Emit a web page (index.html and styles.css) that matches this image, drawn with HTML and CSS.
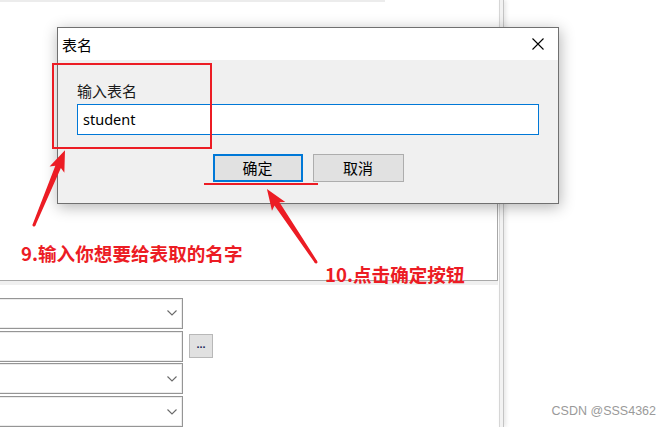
FILE: index.html
```html
<!DOCTYPE html>
<html lang="zh">
<head>
<meta charset="utf-8">
<title>表名</title>
<link rel="stylesheet" href="styles.css">
</head>
<body>
<div class="app">
  <div class="left">
    <div class="topline"></div>
    <div class="panel"></div>
    <div class="band"></div>
    <div class="form">
      <div class="row"><div class="combo"><svg class="chev" width="10" height="6" viewBox="0 0 10 6"><polyline points="0.5,0.5 5,5 9.5,0.5" fill="none" stroke="#6a6a6a" stroke-width="1.1"/></svg></div></div>
      <div class="row"><div class="combo"></div><div class="dots">...</div></div>
      <div class="row"><div class="combo"><svg class="chev" width="10" height="6" viewBox="0 0 10 6"><polyline points="0.5,0.5 5,5 9.5,0.5" fill="none" stroke="#6a6a6a" stroke-width="1.1"/></svg></div></div>
      <div class="row"><div class="combo"><svg class="chev" width="10" height="6" viewBox="0 0 10 6"><polyline points="0.5,0.5 5,5 9.5,0.5" fill="none" stroke="#6a6a6a" stroke-width="1.1"/></svg></div></div>
    </div>
  </div>
  <div class="divider"></div>
  <div class="right"><span class="watermark">CSDN @SSS4362</span></div>
</div>

<div class="dialog">
  <div class="titlebar">
    <span class="title">表名</span>
    <svg class="close" width="12" height="12" viewBox="0 0 12 12"><path d="M0.5 0.5 L11.5 11.5 M11.5 0.5 L0.5 11.5" stroke="#000" stroke-width="1.1" fill="none"/></svg>
  </div>
  <div class="dbody">
    <div class="label">输入表名</div>
    <div class="input">student</div>
    <div class="buttons">
      <div class="btn primary">确定</div>
      <div class="btn">取消</div>
    </div>
  </div>
</div>

<div class="redbox"></div>
<div class="underline"></div>
<div class="note note1">9.输入你想要给表取的名字</div>
<div class="note note2">10.点击确定按钮</div>

<svg class="arrows" width="671" height="427" viewBox="0 0 671 427">
  <g transform="translate(34 225) rotate(-67.5)">
    <polygon points="0,-1.5 63,-3 60,-8 81,0 60,8 63,3 0,1.5" fill="#ec1c24"/>
    <circle cx="0" cy="0" r="1.5" fill="#ec1c24"/>
  </g>
  <g transform="translate(316 262) rotate(-123.9)">
    <polygon points="0,-1.5 70,-3 67,-8 88,0 67,8 70,3 0,1.5" fill="#ec1c24"/>
    <circle cx="0" cy="0" r="1.5" fill="#ec1c24"/>
  </g>
</svg>
</body>
</html>
```

FILE: styles.css
```css
* { box-sizing: border-box; }
html, body {
  margin: 0;
  padding: 0;
  width: 671px;
  height: 427px;
  overflow: hidden;
  background: #ffffff;
  font-family: "Noto Sans", "Noto Sans CJK SC", sans-serif;
}
.app {
  display: flex;
  width: 671px;
  height: 427px;
}
.left {
  width: 499px;
  flex: none;
  display: flex;
  flex-direction: column;
}
.topline {
  width: 385px;
  height: 2px;
  background: #ececec;
}
.panel {
  margin-top: 25px;
  width: 498px;
  height: 260px;
  border-right: 1px solid #a9a9a9;
  border-bottom: 1px solid #a9a9a9;
  background: #fff;
}
.band {
  width: 498px;
  height: 4px;
  background: #f0f0f0;
}
.form {
  padding-top: 13px;
  display: flex;
  flex-direction: column;
  gap: 1.7px;
}
.row {
  display: flex;
  align-items: center;
  gap: 6px;
}
.combo {
  margin-left: -2px;
  width: 185px;
  height: 31px;
  border: 1px solid #959595;
  box-shadow: inset 0 0 0 1px #ececec;
  background: #fff;
  display: flex;
  align-items: center;
  justify-content: flex-end;
  padding-right: 5px;
}
.dots {
  width: 24px;
  height: 24px;
  background: #e1e1e1;
  border: 1px solid #b8b8b8;
  font-size: 11px;
  line-height: 18px;
  text-align: center;
  color: #1c2a5a;
  font-family: "Liberation Sans", sans-serif;
  font-weight: bold;
}
.divider {
  width: 5px;
  flex: none;
  background: #f2f2f2;
  border-left: 1px solid #d6d6d6;
  border-right: 1px solid #c4c4c4;
  box-shadow: 2px 0 4px rgba(0,0,0,0.10);
}
.right {
  flex: 1;
  display: flex;
  flex-direction: column;
  justify-content: flex-end;
  align-items: flex-end;
  padding: 0 15px 8px 0;
}
.watermark {
  font-family: "Liberation Sans", "Noto Sans CJK SC", sans-serif;
  font-size: 12.5px;
  line-height: 15px;
  color: #9a9a9a;
}

/* dialog window */
.dialog {
  position: absolute;
  left: 57px;
  top: 27px;
  width: 502px;
  height: 177px;
  border: 1px solid #707070;
  background: #f0f0f0;
  box-shadow: 1px 3px 14px rgba(0,0,0,0.30);
}
.titlebar {
  height: 32px;
  background: #fff;
  display: flex;
  align-items: center;
  justify-content: space-between;
  padding: 0 14px 0 4px;
}
.title {
  font-size: 15px;
  color: #000;
}
.close { display: block; }
.dbody {
  padding: 21px 19px 0;
}
.label {
  font-size: 15px;
  line-height: 20px;
  color: #1a1a1a;
}
.input {
  margin-top: 3px;
  height: 31px;
  border: 1px solid #0078d7;
  background: #fff;
  padding-left: 5px;
  font-size: 14.5px;
  line-height: 29px;
  color: #000;
}
.buttons {
  margin-top: 19px;
  display: flex;
  justify-content: center;
  gap: 10px;
}
.btn {
  width: 91px;
  height: 28px;
  background: #e1e1e1;
  border: 1px solid #adadad;
  font-size: 15px;
  line-height: 26px;
  text-align: center;
  color: #000;
}
.btn.primary {
  width: 90px;
  border: 2px solid #0078d7;
  line-height: 24px;
}

/* annotations */
.redbox {
  position: absolute;
  left: 52px;
  top: 63px;
  width: 160px;
  height: 86px;
  border: 2px solid #ec1c24;
}
.underline {
  position: absolute;
  left: 204px;
  top: 183px;
  width: 114px;
  height: 2px;
  background: #ec1c24;
}
.note {
  position: absolute;
  font-family: "Noto Sans CJK SC", sans-serif;
  font-weight: bold;
  font-size: 18.6px;
  line-height: 22px;
  color: #ec1c24;
  white-space: nowrap;
}
.note1 { left: 21px; top: 242px; }
.note2 { left: 325px; top: 263px; }
.arrows {
  position: absolute;
  left: 0;
  top: 0;
  pointer-events: none;
}
```
